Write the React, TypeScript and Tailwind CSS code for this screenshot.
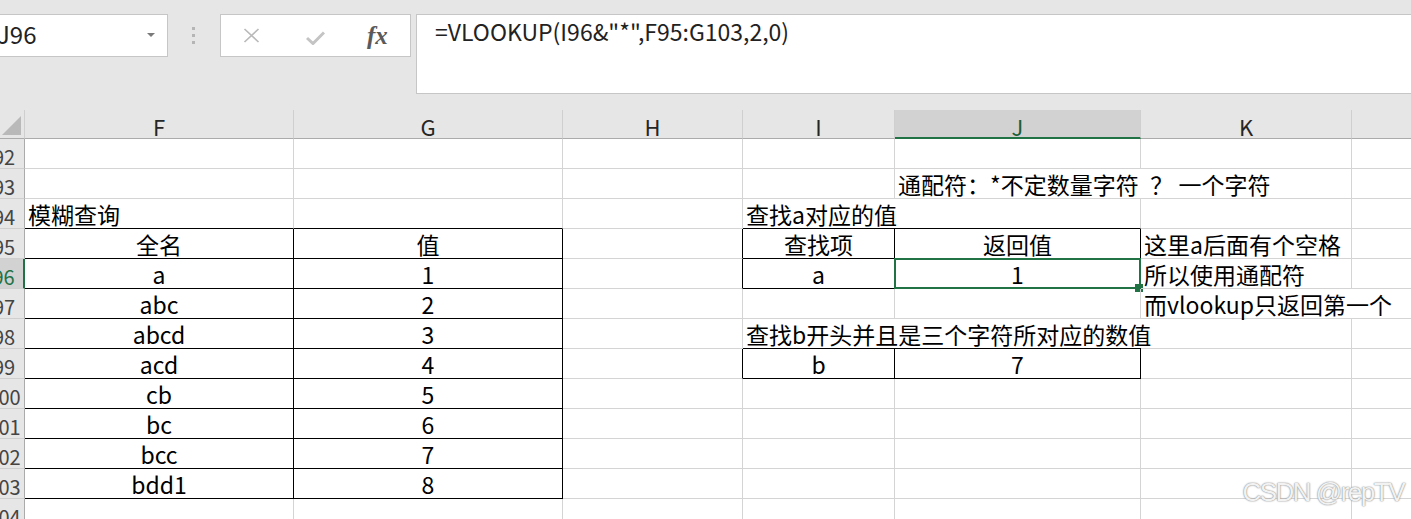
import React from 'react'

type Align = 'left' | 'center'
type Cell = { text: string; align?: Align }

const COLS = ['F', 'G', 'H', 'I', 'J', 'K', 'L']

// sheet content, keyed by row then column
const DATA: Record<number, Record<string, Cell>> = {
  93: { J: { text: '通配符：*不定数量字符\u2002？ 一个字符', align: 'left' } },
  94: {
    F: { text: '模糊查询', align: 'left' },
    I: { text: '查找a对应的值', align: 'left' },
  },
  95: {
    F: { text: '全名' },
    G: { text: '值' },
    I: { text: '查找项' },
    J: { text: '返回值' },
    K: { text: '这里a后面有个空格', align: 'left' },
  },
  96: {
    F: { text: 'a' },
    G: { text: '1' },
    I: { text: 'a' },
    J: { text: '1' },
    K: { text: '所以使用通配符', align: 'left' },
  },
  97: {
    F: { text: 'abc' },
    G: { text: '2' },
    K: { text: '而vlookup只返回第一个', align: 'left' },
  },
  98: {
    F: { text: 'abcd' },
    G: { text: '3' },
    I: { text: '查找b开头并且是三个字符所对应的数值', align: 'left' },
  },
  99: { F: { text: 'acd' }, G: { text: '4' }, I: { text: 'b' }, J: { text: '7' } },
  100: { F: { text: 'cb' }, G: { text: '5' } },
  101: { F: { text: 'bc' }, G: { text: '6' } },
  102: { F: { text: 'bcc' }, G: { text: '7' } },
  103: { F: { text: 'bdd1' }, G: { text: '8' } },
}

const ROWS = [92, 93, 94, 95, 96, 97, 98, 99, 100, 101, 102, 103, 104]

const inTable = (r: number, c: string) =>
  (r >= 95 && r <= 103 && (c === 'F' || c === 'G')) ||
  ((r === 95 || r === 96 || r === 99) && (c === 'I' || c === 'J'))

// text spilling into the next cell hides that gridline
const overflowRight = (r: number, c: string) =>
  (r === 93 && c === 'J') ||
  (r === 94 && c === 'I') ||
  (r === 97 && c === 'K') ||
  (r === 98 && (c === 'I' || c === 'J'))

function rightBorder(r: number, c: string) {
  if (inTable(r, c) || (c === 'H' && (r === 95 || r === 96 || r === 99))) return 'border-r border-r-black'
  if (overflowRight(r, c)) return ''
  return 'border-r border-r-[#d4d4d4]'
}

function bottomBorder(r: number, c: string) {
  if (inTable(r, c)) return 'border-b border-b-black'
  if (r === 94 && (c === 'F' || c === 'G' || c === 'I' || c === 'J')) return 'border-b border-b-black'
  if (r === 98 && (c === 'I' || c === 'J')) return 'border-b border-b-black'
  return 'border-b border-b-[#d4d4d4]'
}

function XIcon() {
  return (
    <svg width="17" height="15" viewBox="0 0 17 15" className="shrink-0">
      <path d="M1.5 1 L15.5 14 M15.5 1 L1.5 14" stroke="#b9b9b9" strokeWidth="1.6" fill="none" />
    </svg>
  )
}

function CheckIcon() {
  return (
    <svg width="19" height="14" viewBox="0 0 19 14" className="shrink-0">
      <path d="M1 7 L7 12.5 L18 1.5" stroke="#c4c4c4" strokeWidth="3" fill="none" strokeLinejoin="miter" />
    </svg>
  )
}

function TopBar() {
  return (
    <div className="h-[110px] flex items-start pt-[14px]">
      <div className="ml-[-13px] w-[181px] h-[43px] shrink-0 bg-white border border-[#c6c6c6] flex items-center pl-[9px] pb-[3px]">
        <span className="text-[24px] leading-[30px] text-[#222]">J96</span>
        <span className="ml-auto mr-[12px] mt-[2px] w-0 h-0 border-l-[4px] border-r-[4px] border-t-[4px] border-l-transparent border-r-transparent border-t-[#7a7a7a]" />
      </div>
      <div className="ml-[24px] mt-[13px] flex flex-col gap-[4px] shrink-0">
        <span className="w-[3px] h-[3px] bg-[#b5b5b5]" />
        <span className="w-[3px] h-[3px] bg-[#b5b5b5]" />
        <span className="w-[3px] h-[3px] bg-[#b5b5b5]" />
      </div>
      <div className="ml-[25px] w-[191px] h-[43px] shrink-0 bg-white border border-[#c6c6c6] flex items-center pl-[22px]">
        <XIcon />
        <span className="ml-[46px] mt-[4px]">
          <CheckIcon />
        </span>
        <span className="ml-[42px] text-[25px] leading-[30px] italic font-semibold text-[#5a5a5a] font-['Liberation_Serif',serif]">
          fx
        </span>
      </div>
      <div className="ml-[5px] w-[1100px] h-[80px] shrink-0 bg-white border border-[#c6c6c6] pl-[18px] pt-[1px]">
        <span className="text-[23px] leading-[30px] text-[#222]">=VLOOKUP(I96&amp;"*",F95:G103,2,0)</span>
      </div>
    </div>
  )
}

function Sheet() {
  return (
    <div className="ml-[-16px] grid grid-cols-[41px_269px_269px_180px_152px_246px_211px_200px] bg-white">
      {/* column headers */}
      <div className="h-[29px] bg-[#e6e6e6] border-r border-r-[#cfcfcf] border-b border-b-[#ababab] flex items-end justify-end pr-[3px] pb-[3px]">
        <svg width="19" height="19" viewBox="0 0 19 19">
          <path d="M19 0 L19 19 L0 19 Z" fill="#b9b9b9" />
        </svg>
      </div>
      {COLS.map((c) =>
        c === 'J' ? (
          <div
            key={c}
            className="h-[29px] bg-[#d2d2d2] border-r border-r-[#cfcfcf] border-b-2 border-b-[#217346] text-center text-[22px] leading-[24px] pt-[4px] text-[#1d5e38]"
          >
            {c}
          </div>
        ) : (
          <div
            key={c}
            className="h-[29px] bg-[#e6e6e6] border-r border-r-[#cfcfcf] border-b border-b-[#ababab] text-center text-[22px] leading-[24px] pt-[4px] text-[#262626]"
          >
            {c}
          </div>
        )
      )}

      {ROWS.map((r) => (
        <React.Fragment key={r}>
          {r === 96 ? (
            <div className="h-[30px] bg-[#d2d2d2] border-r-2 border-r-[#217346] border-b border-b-[#cfcfcf] text-center text-[20px] leading-[24px] pt-[6px] text-[#217346]">
              {r}
            </div>
          ) : (
            <div className="h-[30px] bg-[#e6e6e6] border-r border-r-[#ababab] border-b border-b-[#cfcfcf] text-center text-[20px] leading-[24px] pt-[6px] text-[#444]">
              {r}
            </div>
          )}
          {COLS.map((c) => {
            const cell = DATA[r]?.[c]
            const align = cell?.align === 'left' ? 'text-left pl-[3px]' : 'text-center'
            return (
              <div
                key={c}
                className={`relative h-[30px] whitespace-nowrap text-[23px] leading-[31px] text-black ${align} ${rightBorder(r, c)} ${bottomBorder(r, c)}`}
              >
                {cell?.text}
                {r === 96 && c === 'J' && (
                  <>
                    <div className="absolute -top-px -left-px -right-px -bottom-px border-2 border-[#217346]" />
                    <div className="absolute -right-[3px] -bottom-[4px] w-[8px] h-[8px] bg-[#217346]" />
                  </>
                )}
              </div>
            )
          })}
        </React.Fragment>
      ))}
    </div>
  )
}

export default function App() {
  return (
    <div className="relative w-[1411px] h-[519px] overflow-hidden bg-[#e6e6e6] font-['Noto_Sans_CJK_SC','Noto_Sans',sans-serif]">
      <TopBar />
      <Sheet />
      <div className="absolute right-[7px] bottom-[12px] text-[26px] leading-[30px] tracking-[-1.5px] text-[#f2f2f2] font-['Liberation_Sans',sans-serif] [text-shadow:0_0_1px_#8a8a8a,0_0_2px_#9a9a9a]">
        CSDN @repTV
      </div>
    </div>
  )
}
